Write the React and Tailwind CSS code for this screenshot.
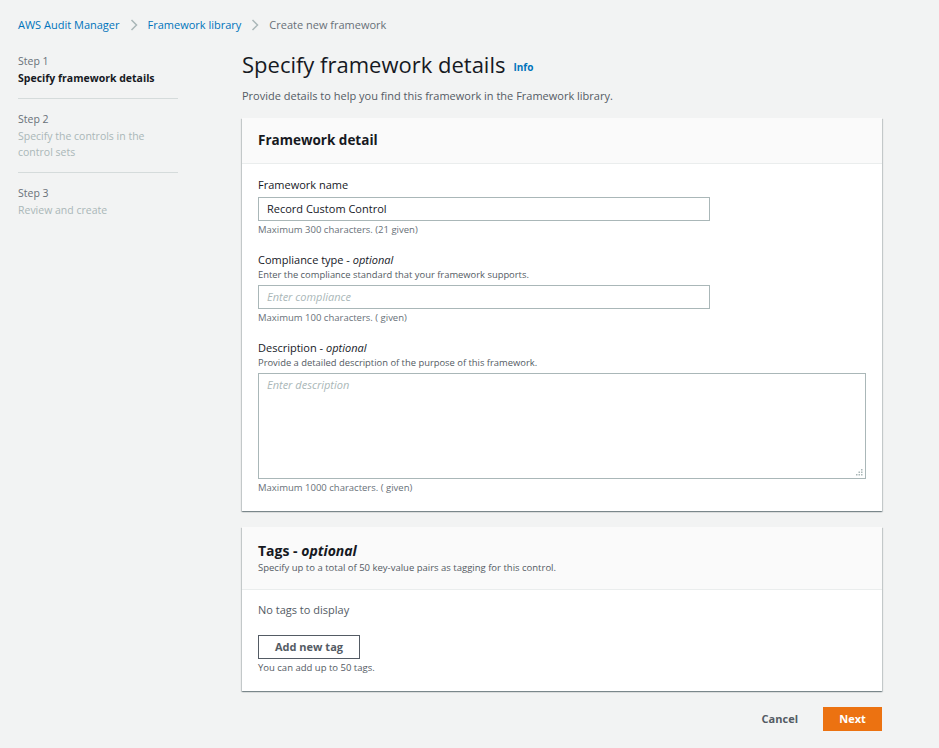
import React from 'react'

const font = { fontFamily: '"Open Sans", "Noto Sans", sans-serif' }
const cardShadow =
  'bg-white shadow-[0_1px_1px_0_rgba(0,28,36,0.3),1px_1px_1px_0_rgba(0,28,36,0.15),-1px_1px_1px_0_rgba(0,28,36,0.15)]'

function Chevron() {
  return (
    <svg width="8" height="12" viewBox="0 0 8 12" className="mx-[10px] text-[#aab7b8]">
      <path d="M1.5 1l5 5-5 5" fill="none" stroke="currentColor" strokeWidth="1.5" />
    </svg>
  )
}

function Field({ label, optional, desc, children, hint }) {
  return (
    <div className="flex flex-col">
      <div className="text-[11px] leading-[16px] text-[#16191f]">
        {label}{optional && <> - <i>optional</i></>}
      </div>
      {desc && <div className="text-[9.4px] leading-[13px] text-[#545b64]">{desc}</div>}
      <div className="mt-[4px]">{children}</div>
      <div className="mt-[2px] text-[9.5px] leading-[14px] text-[#687078]">{hint}</div>
    </div>
  )
}

export default function App() {
  return (
    <div style={font} className="min-h-[748px] w-[939px] bg-[#f2f3f3] text-[#16191f]">
      <nav className="flex items-center px-[18px] pt-[17px] text-[11px] leading-[16px]">
        <a className="text-[#0073bb]">AWS Audit Manager</a>
        <Chevron />
        <a className="text-[#0073bb]">Framework library</a>
        <Chevron />
        <span className="text-[#687078]">Create new framework</span>
      </nav>

      <div className="mt-[20px] flex">
        <aside className="w-[160px] ml-[18px] shrink-0 text-[10.5px] leading-[17px]">
          <div className="pb-[11px] border-b border-[#d5dbdb]">
            <div className="text-[#687078]">Step 1</div>
            <div className="font-bold text-[#16191f]">Specify framework details</div>
          </div>
          <div className="pt-[12px] pb-[12px] border-b border-[#d5dbdb]">
            <div className="text-[#687078]">Step 2</div>
            <div className="text-[#aab7b8] leading-[16px]">Specify the controls in the control sets</div>
          </div>
          <div className="pt-[12px]">
            <div className="text-[#687078]">Step 3</div>
            <div className="text-[#aab7b8]">Review and create</div>
          </div>
        </aside>

        <main className="ml-[64px] w-[640px]">
          <div className="flex items-end -mt-[5px]">
            <h1 className="text-[22px] leading-[32px] text-[#16191f]">Specify framework details</h1>
            <span className="ml-[8px] mb-[5px] text-[10px] font-bold text-[#0073bb]">Info</span>
          </div>
          <p className="mt-[8px] text-[11px] leading-[16px] text-[#545b64]">
            Provide details to help you find this framework in the Framework library.
          </p>

          <section className={`mt-[14px] ${cardShadow}`}>
            <div className="h-[46px] flex items-center px-[16px] bg-[#fafafa] border-b border-[#eaeded]">
              <h2 className="text-[13.5px] font-bold text-[#16191f]">Framework detail</h2>
            </div>
            <div className="px-[16px] pt-[13px] pb-[16px] flex flex-col gap-[15px]">
              <Field label="Framework name" hint="Maximum 300 characters. (21 given)">
                <div className="w-[452px] h-[24px] border border-[#aab7b8] flex items-center px-[8px] text-[11px] text-[#16191f]">
                  Record Custom Control
                </div>
              </Field>
              <Field
                label="Compliance type"
                optional
                desc="Enter the compliance standard that your framework supports."
                hint="Maximum 100 characters. ( given)"
              >
                <div className="w-[452px] h-[24px] border border-[#aab7b8] flex items-center px-[8px] text-[11px] italic text-[#aab7b8]">
                  Enter compliance
                </div>
              </Field>
              <Field
                label="Description"
                optional
                desc="Provide a detailed description of the purpose of this framework."
                hint="Maximum 1000 characters. ( given)"
              >
                <div className="relative w-[608px] h-[106px] border border-[#aab7b8] px-[8px] pt-[3px] text-[11px] italic text-[#aab7b8]">
                  Enter description
                  <svg width="7" height="7" viewBox="0 0 7 7" className="absolute right-[2px] bottom-[2px]">
                    <rect x="5" y="0" width="1.5" height="1.5" fill="#aab7b8" />
                    <rect x="2.5" y="2.5" width="1.5" height="1.5" fill="#aab7b8" />
                    <rect x="5" y="2.5" width="1.5" height="1.5" fill="#aab7b8" />
                    <rect x="0" y="5" width="1.5" height="1.5" fill="#aab7b8" />
                    <rect x="2.5" y="5" width="1.5" height="1.5" fill="#aab7b8" />
                    <rect x="5" y="5" width="1.5" height="1.5" fill="#aab7b8" />
                  </svg>
                </div>
              </Field>
            </div>
          </section>

          <section className={`mt-[16px] ${cardShadow}`}>
            <div className="h-[63px] flex flex-col justify-center px-[16px] bg-[#fafafa] border-b border-[#eaeded]">
              <h2 className="text-[14px] leading-[18px] font-bold text-[#16191f]">
                Tags - <i>optional</i>
              </h2>
              <div className="mt-[1px] text-[9.5px] leading-[13px] text-[#545b64]">
                Specify up to a total of 50 key-value pairs as tagging for this control.
              </div>
            </div>
            <div className="px-[16px] pt-[12px] pb-[16px]">
              <div className="text-[11px] leading-[16px] text-[#545b64]">No tags to display</div>
              <button className="mt-[17px] w-[102px] h-[24px] border border-[#545b64] text-[11px] font-bold text-[#545b64]">
                Add new tag
              </button>
              <div className="mt-[2px] text-[9.5px] leading-[14px] text-[#545b64]">You can add up to 50 tags.</div>
            </div>
          </section>

          <div className="mt-[16px] flex justify-end items-center gap-[25px]">
            <button className="text-[11px] font-bold text-[#545b64]">Cancel</button>
            <button className="w-[59px] h-[24px] bg-[#ec7211] text-white text-[11px] font-bold">Next</button>
          </div>
        </main>
      </div>
    </div>
  )
}
